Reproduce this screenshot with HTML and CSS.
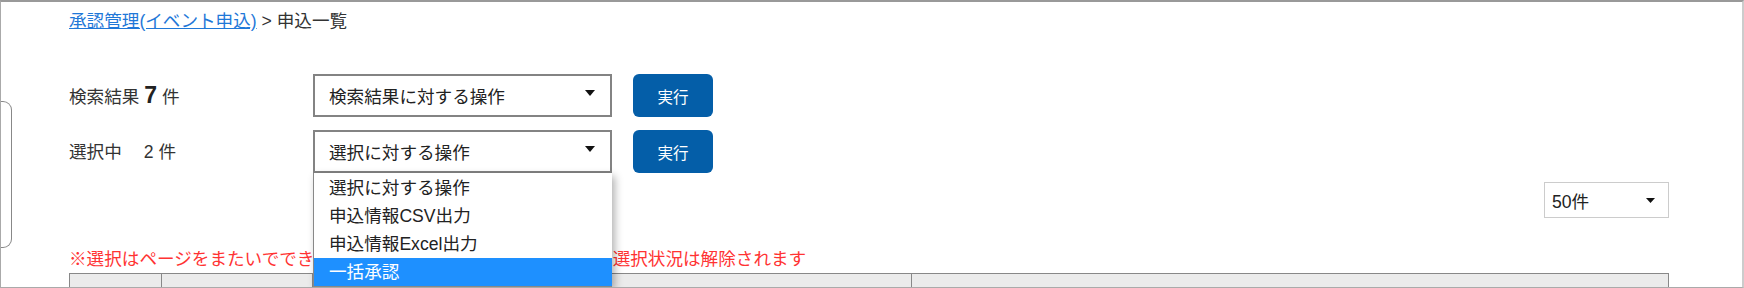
FILE: index.html
```html
<!DOCTYPE html>
<html lang="ja">
<head>
    <meta charset="UTF-8">
    <meta name="viewport" content="width=device-width, initial-scale=1.0">
    <title>申込一覧</title>
    <link rel="stylesheet" href="styles.css">
</head>
<body>
    <div class="page">
        <div class="drawer-tab"></div>
        <div class="content">
            <nav class="breadcrumb">
                <a href="#">承認管理(イベント申込)</a> &gt; 申込一覧
            </nav>

            <div class="actions">
                <div class="action-row">
                    <div class="count-label">検索結果 <span class="count-big">7</span> 件</div>
                    <div class="select">
                        <span>検索結果に対する操作</span>
                        <svg class="caret" width="10" height="6" viewBox="0 0 10 6"><path d="M0 0h10L5 6z"/></svg>
                    </div>
                    <button class="run-btn">実行</button>
                </div>
                <div class="action-row">
                    <div class="count-label">選択中<span class="count-num">2</span> 件</div>
                    <div class="select-wrap">
                        <div class="select">
                            <span>選択に対する操作</span>
                            <svg class="caret" width="10" height="6" viewBox="0 0 10 6"><path d="M0 0h10L5 6z"/></svg>
                        </div>
                        <ul class="select-menu">
                            <li>選択に対する操作</li>
                            <li>申込情報CSV出力</li>
                            <li>申込情報Excel出力</li>
                            <li class="active">一括承認</li>
                        </ul>
                    </div>
                    <button class="run-btn">実行</button>
                </div>
            </div>

            <div class="pager-row">
                <div class="select select-small">
                    <span>50件</span>
                    <svg class="caret" width="9" height="5" viewBox="0 0 9 5"><path d="M0 0h9L4.5 5z"/></svg>
                </div>
            </div>

            <p class="notice">※選択はページをまたいでできません。ページ移動・再検索を行うと選択状況は解除されます</p>

            <table class="result-table">
                <thead>
                    <tr>
                        <th class="col-check"></th>
                        <th class="col-no"></th>
                        <th class="col-name"></th>
                        <th></th>
                    </tr>
                </thead>
            </table>
        </div>
    </div>
</body>
</html>
```

FILE: styles.css
```css
body {
    margin: 0;
    font-family: "Liberation Sans", "Noto Sans CJK JP", sans-serif;
    font-size: 17.6px;
    color: #333;
    background-color: #fff;
}
.page {
    position: relative;
    box-sizing: border-box;
    width: 1744px;
    height: 288px;
    border: 1px solid #aaa;
    border-top: 2px solid #999;
    border-right: 2px solid #ccc;
    overflow: hidden;
}
.drawer-tab {
    position: absolute;
    left: -1px;
    top: 99px;
    width: 12px;
    height: 147px;
    box-sizing: border-box;
    border: 1px solid #888;
    border-left: none;
    border-radius: 0 9px 9px 0;
}
.content {
    width: 1600px;
    padding-left: 68px;
}
.breadcrumb {
    padding-top: 6px;
    line-height: 26px;
    color: #333;
}
.breadcrumb a {
    color: #1f78d8;
}
.actions {
    margin-top: 40px;
    display: flex;
    flex-direction: column;
    gap: 13px;
}
.action-row {
    display: flex;
    align-items: center;
}
.count-label {
    width: 244px;
    line-height: 26px;
    color: #333;
}
.count-big {
    font-size: 23px;
    font-weight: bold;
    color: #222;
}
.count-num {
    margin-left: 22px;
}
.select-wrap {
    position: relative;
}
.select {
    box-sizing: border-box;
    width: 299px;
    height: 43px;
    border: 2px solid #838383;
    padding: 0 15px 0 14px;
    display: flex;
    align-items: center;
    justify-content: space-between;
    color: #222;
    background-color: #fff;
}
.caret {
    fill: #111;
    margin-top: -6px;
}
.select-menu {
    position: absolute;
    top: 43px;
    left: 0;
    width: 299px;
    box-sizing: border-box;
    margin: 0;
    padding: 1px 0 0;
    list-style: none;
    background-color: #fff;
    border-left: 1px solid #888;
    border-bottom: 1px solid #888;
    box-shadow: 3px 3px 8px rgba(0, 0, 0, 0.3);
    z-index: 2;
}
.select-menu li {
    height: 28px;
    line-height: 28px;
    padding-left: 15px;
    color: #222;
}
.select-menu li.active {
    background-color: #1e90ff;
    color: #fff;
}
.run-btn {
    margin-left: 21px;
    width: 80px;
    height: 43px;
    border: none;
    border-radius: 6px;
    background-color: #045ea8;
    color: #fff;
    font-family: inherit;
    font-size: 15.5px;
    cursor: pointer;
}
.pager-row {
    display: flex;
    justify-content: flex-end;
    margin-top: 9px;
}
.select-small {
    width: 125px;
    height: 36px;
    border: 1px solid #ccc;
    padding: 0 13px 0 7px;
}
.select-small .caret {
    margin-top: 0;
}
.notice {
    margin: 28px 0 0;
    line-height: 26px;
    color: #f33;
}
.result-table {
    width: 1600px;
    table-layout: fixed;
    border-collapse: collapse;
    margin-top: 1px;
}
.result-table th {
    height: 40px;
    padding: 0;
    background-color: #ebebeb;
    border: 1px solid #888;
}
.col-check {
    width: 91px;
}
.col-no {
    width: 150px;
}
.col-name {
    width: 598px;
}
```
